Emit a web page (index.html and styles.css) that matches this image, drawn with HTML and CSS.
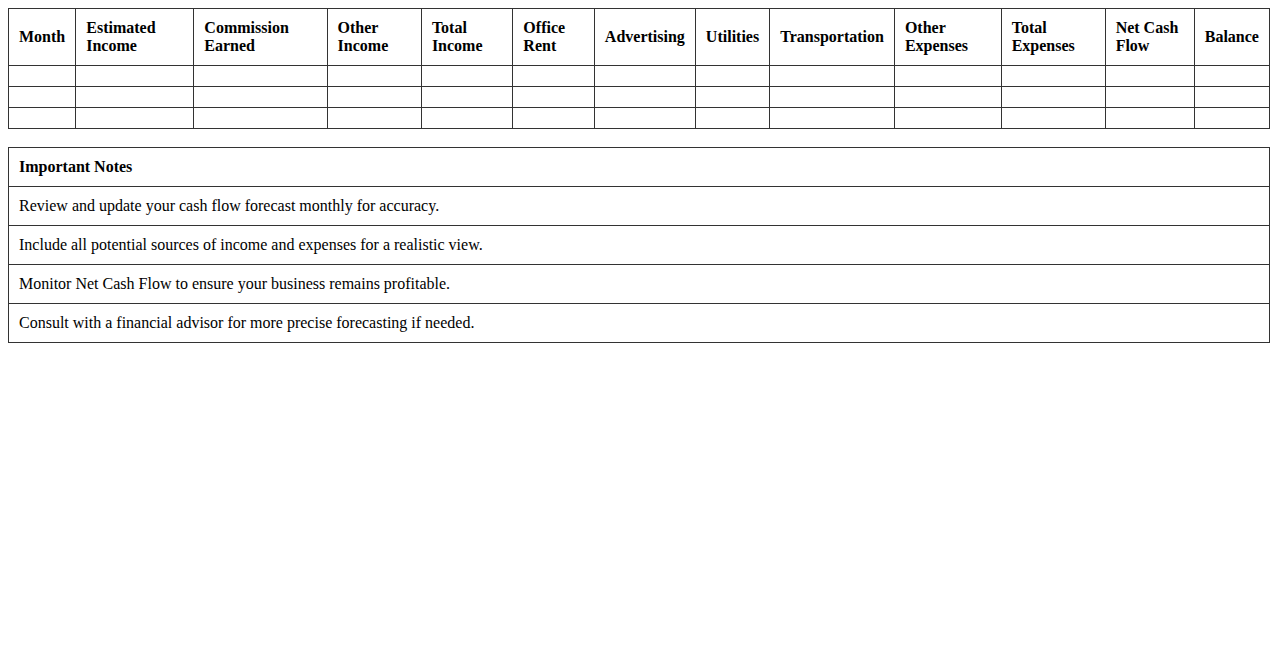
FILE: index.html
```html
<!DOCTYPE html>
<html>
<head>
<meta charset="utf-8">
<link rel="stylesheet" href="styles.css">
</head>
<body>
<table class="forecast">
  <thead>
    <tr>
      <th>Month</th>
      <th>Estimated Income</th>
      <th>Commission Earned</th>
      <th>Other Income</th>
      <th>Total Income</th>
      <th>Office Rent</th>
      <th>Advertising</th>
      <th>Utilities</th>
      <th>Transportation</th>
      <th>Other Expenses</th>
      <th>Total Expenses</th>
      <th>Net Cash Flow</th>
      <th>Balance</th>
    </tr>
  </thead>
  <tbody>
    <tr><td></td><td></td><td></td><td></td><td></td><td></td><td></td><td></td><td></td><td></td><td></td><td></td><td></td></tr>
    <tr><td></td><td></td><td></td><td></td><td></td><td></td><td></td><td></td><td></td><td></td><td></td><td></td><td></td></tr>
    <tr><td></td><td></td><td></td><td></td><td></td><td></td><td></td><td></td><td></td><td></td><td></td><td></td><td></td></tr>
  </tbody>
</table>
<table class="notes">
  <tr><th>Important Notes</th></tr>
  <tr><td>Review and update your cash flow forecast monthly for accuracy.</td></tr>
  <tr><td>Include all potential sources of income and expenses for a realistic view.</td></tr>
  <tr><td>Monitor Net Cash Flow to ensure your business remains profitable.</td></tr>
  <tr><td>Consult with a financial advisor for more precise forecasting if needed.</td></tr>
</table>
</body>
</html>
```
FILE: styles.css
```css
body {
  margin: 8px;
  font-family: "Liberation Serif", "Times New Roman", serif;
  font-size: 16px;
  color: #000;
  background: #fff;
}
table {
  width: 100%;
  border-collapse: collapse;
}
th, td {
  border: 1px solid #333;
  padding: 10px;
  text-align: left;
}
th {
  font-weight: bold;
}
.notes {
  margin-top: 18px;
}
```
